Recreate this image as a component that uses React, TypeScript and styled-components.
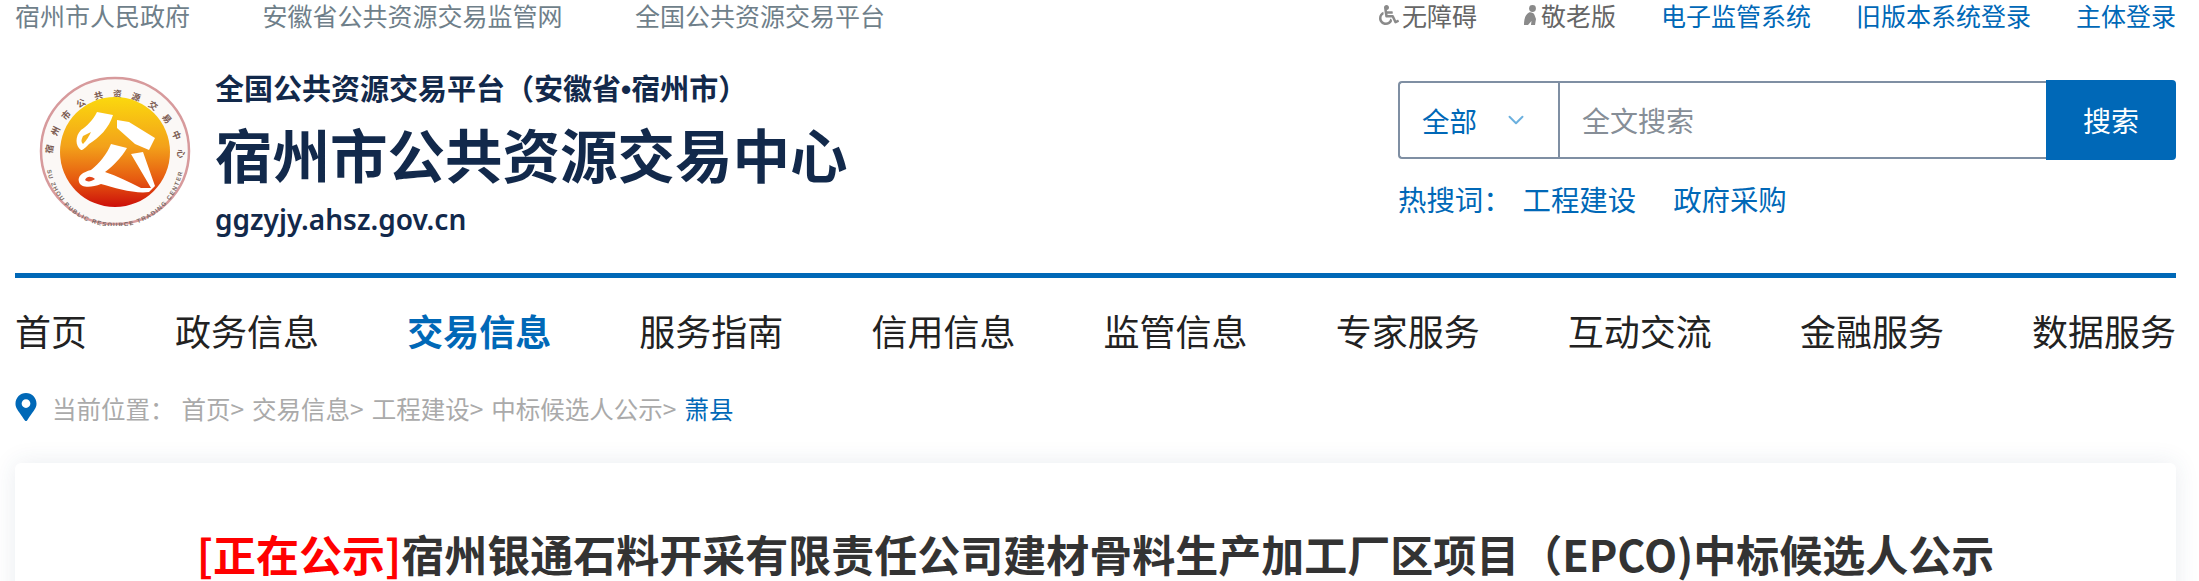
import React from 'react';
import styled, { createGlobalStyle } from 'styled-components';
import { ChevronDown } from 'lucide-react';
import { FaMapMarkerAlt, FaWheelchair } from 'react-icons/fa';

const blue = '#0068b7';
const navy = '#12294b';

const GlobalStyle = createGlobalStyle`
    html, body {
        margin: 0;
        padding: 0;
        background: #fff;
        font-family: "Noto Sans CJK SC", "Noto Sans", sans-serif;
    }
    a {
        text-decoration: none;
        color: inherit;
    }
`;

const Page = styled.div`
    height: 581px;
    overflow: hidden;
    padding: 0 23px 0 15px;
`;

// Top links
const TopBar = styled.div`
    display: flex;
    justify-content: space-between;
    height: 32px;
    font-size: 25px;
    line-height: 30px;
`;

const TopGroup = styled.div<{ $gap: number }>`
    display: flex;
    gap: ${(p) => p.$gap}px;
    align-items: flex-start;
`;

const TopLink = styled.a<{ $tone?: 'slate' | 'gray' | 'blue' }>`
    display: flex;
    align-items: center;
    gap: 3px;
    white-space: nowrap;
    color: ${(p) => (p.$tone === 'blue' ? blue : p.$tone === 'gray' ? '#666' : '#6f7f8a')};
    svg {
        color: #8a8a8a;
        flex: none;
    }
`;

// Header
const Header = styled.div`
    display: flex;
    justify-content: space-between;
    height: 241px;
`;

const Brand = styled.div`
    display: flex;
    padding-left: 24px;
    gap: 24px;
`;

const LogoWrap = styled.div`
    padding-top: 44px;
`;

const BrandText = styled.div`
    display: flex;
    flex-direction: column;
    padding-top: 35px;
    color: ${navy};
`;

const BrandSub = styled.div`
    font-size: 29px;
    line-height: 40px;
    font-weight: 700;
    white-space: nowrap;
`;

const BrandDot = styled.span`
    font-family: "Liberation Sans", sans-serif;
`;

const BrandTitle = styled.h1`
    margin: 3px 0 6px;
    font-size: 57.5px;
    line-height: 80px;
    font-weight: 700;
    white-space: nowrap;
`;

const BrandUrl = styled.div`
    font-family: "Noto Sans", sans-serif;
    font-size: 28px;
    line-height: 40px;
    font-weight: 600;
`;

const SearchCol = styled.div`
    width: 778px;
    padding-top: 48px;
`;

const SearchBox = styled.div`
    display: flex;
    height: 80px;
    align-items: stretch;
`;

const SearchFrame = styled.div`
    flex: 1;
    display: flex;
    margin: 1px 0;
    border: 2px solid #7f8fa3;
    border-right: none;
    border-radius: 4px 0 0 4px;
`;

const SelectBox = styled.div`
    width: 160px;
    display: flex;
    align-items: center;
    padding-left: 22px;
    gap: 26px;
    box-sizing: border-box;
    border-right: 2px solid #7f8fa3;
    font-size: 27.5px;
    color: ${blue};
    svg {
        color: #6bb0de;
    }
`;

const SearchInput = styled.input`
    flex: 1;
    min-width: 0;
    border: none;
    outline: none;
    padding: 0 22px;
    font-family: inherit;
    font-size: 28px;
    background: transparent;
    &::placeholder {
        color: #868e97;
        opacity: 1;
    }
`;

const SearchButton = styled.button`
    width: 130px;
    border: none;
    border-radius: 0 4px 4px 0;
    background: ${blue};
    color: #fff;
    font-family: inherit;
    font-size: 28px;
`;

const HotWords = styled.div`
    display: flex;
    margin-top: 19px;
    gap: 37px;
    font-size: 28.4px;
    line-height: 40px;
    color: ${blue};
`;

const HotLabel = styled.span`
    margin-right: -26px;
`;

// Navigation
const Nav = styled.nav`
    display: flex;
    justify-content: space-between;
    border-top: 5px solid ${blue};
    height: 103px;
    padding-bottom: 5px;
    align-items: center;
`;

const NavItem = styled.a<{ $active?: boolean }>`
    font-size: 36px;
    font-weight: ${(p) => (p.$active ? 700 : 400)};
    color: ${(p) => (p.$active ? blue : '#222')};
    white-space: nowrap;
`;

// Breadcrumb
const Crumbs = styled.div`
    display: flex;
    align-items: center;
    height: 45px;
    font-size: 24.5px;
    color: #aaa;
    white-space: nowrap;
    svg {
        color: ${blue};
        margin: -3px 12px 0 -3px;
    }
`;

const CrumbLabel = styled.span`
    margin-right: 7px;
`;

const CrumbLink = styled.a<{ $current?: boolean }>`
    margin-right: 8px;
    color: ${(p) => (p.$current ? blue : '#aaa')};
`;

// Article card
const Card = styled.div`
    margin-top: 32px;
    height: 300px;
    padding-top: 64px;
    box-sizing: border-box;
    background: #fff;
    border-radius: 6px;
    box-shadow: 0 0 24px rgba(40, 70, 110, 0.1);
    text-align: center;
`;

const Title = styled.h2`
    margin: 0;
    font-size: 43px;
    line-height: 52px;
    font-weight: 700;
    color: #333;
    white-space: nowrap;
`;

const TitleState = styled.span`
    color: #f00;
    font-weight: 700;
`;

const ringTop = '宿州市公共资源交易中心';
const ringBottom = 'SU ZHOU PUBLIC RESOURCE TRADING CENTER';

function Logo() {
    return (
        <svg width="152" height="150" viewBox="0 0 152 150">
            <defs>
                <linearGradient id="sun" x1="0" y1="0" x2="0" y2="1">
                    <stop offset="0" stopColor="#fbd80e" />
                    <stop offset="0.45" stopColor="#f3a11a" />
                    <stop offset="0.75" stopColor="#e65a10" />
                    <stop offset="1" stopColor="#cc0f0a" />
                </linearGradient>
                <path id="ringTopPath" d="M 13 84 A 63 63 0 1 1 139 84" />
                <path id="ringBottomPath" d="M 7 82 A 69 69 0 0 0 145 82" />
            </defs>
            <ellipse cx="76" cy="75" rx="74" ry="73" fill="#fbf8f6" stroke="#d79a9c" strokeWidth="2.5" />
            <text fontSize="9" fontWeight="700" fill="#7a5a50" fontFamily="'Noto Sans CJK SC', sans-serif">
                <textPath href="#ringTopPath" textLength="190" startOffset="6">{ringTop}</textPath>
            </text>
            <text fontSize="6" fontWeight="700" fill="#7a6a64" fontFamily="'Liberation Sans', sans-serif">
                <textPath href="#ringBottomPath" startOffset="12" textLength="190">{ringBottom}</textPath>
            </text>
            <circle cx="76" cy="76" r="55" fill="url(#sun)" />
            <g fill="#fff">
                <path d="M58 36 L74 39 C70 52 60 62 50 68 C46 72 44 74 42 74 C36 70 36 60 42 54 C48 50 54 44 58 36 Z" />
                <path d="M78 44 L90 46 L116 62 L110 74 L96 68 L78 52 Z" />
                <path d="M72 68 L88 72 C82 82 74 90 66 96 C78 100 90 106 102 112 L112 112 L92 78 L104 76 L116 110 L110 116 C96 118 76 112 62 108 C52 112 42 112 40 106 C38 100 44 96 52 94 C60 88 68 78 72 68 Z" />
            </g>
            <path d="M44 60 C42 64 42 66 44 68 C48 64 50 60 52 56 Z" fill="#f5b21a" />
            <path d="M46 104 C48 100 52 100 56 103 C52 106 48 106 46 104 Z" fill="#e2461a" />
        </svg>
    );
}

function ElderIcon() {
    return (
        <svg width="16" height="22" viewBox="0 0 16 22">
            <circle cx="10.5" cy="4.5" r="3.4" fill="#8a8a8a" />
            <path d="M7 8.5 C9 8 12 9 12.5 11 L14 15 L13 21 H9 L9.5 17 L6 21 H2 C2 15 3 11 7 8.5 Z" fill="#8a8a8a" />
        </svg>
    );
}

const navItems = ['首页', '政务信息', '交易信息', '服务指南', '信用信息', '监管信息', '专家服务', '互动交流', '金融服务', '数据服务'];
const crumbs = ['首页>', '交易信息>', '工程建设>', '中标候选人公示>'];

export default function App() {
    return (
        <Page>
            <GlobalStyle />
            <TopBar>
                <TopGroup $gap={72.5}>
                    <TopLink>宿州市人民政府</TopLink>
                    <TopLink>安徽省公共资源交易监管网</TopLink>
                    <TopLink>全国公共资源交易平台</TopLink>
                </TopGroup>
                <TopGroup $gap={45}>
                    <TopLink $tone="gray"><FaWheelchair size={20} />无障碍</TopLink>
                    <TopLink $tone="gray"><ElderIcon />敬老版</TopLink>
                    <TopLink $tone="blue">电子监管系统</TopLink>
                    <TopLink $tone="blue">旧版本系统登录</TopLink>
                    <TopLink $tone="blue">主体登录</TopLink>
                </TopGroup>
            </TopBar>

            <Header>
                <Brand>
                    <LogoWrap><Logo /></LogoWrap>
                    <BrandText>
                        <BrandSub>全国公共资源交易平台（安徽省<BrandDot>•</BrandDot>宿州市）</BrandSub>
                        <BrandTitle>宿州市公共资源交易中心</BrandTitle>
                        <BrandUrl>ggzyjy.ahsz.gov.cn</BrandUrl>
                    </BrandText>
                </Brand>
                <SearchCol>
                    <SearchBox>
                        <SearchFrame>
                            <SelectBox>全部<ChevronDown size={26} strokeWidth={1.8} /></SelectBox>
                            <SearchInput placeholder="全文搜索" />
                        </SearchFrame>
                        <SearchButton>搜索</SearchButton>
                    </SearchBox>
                    <HotWords>
                        <HotLabel>热搜词：</HotLabel>
                        <a>工程建设</a>
                        <a>政府采购</a>
                    </HotWords>
                </SearchCol>
            </Header>

            <Nav>
                {navItems.map((item) => (
                    <NavItem key={item} $active={item === '交易信息'}>{item}</NavItem>
                ))}
            </Nav>

            <Crumbs>
                <FaMapMarkerAlt size={28} />
                <CrumbLabel>当前位置：</CrumbLabel>
                {crumbs.map((c) => (
                    <CrumbLink key={c}>{c}</CrumbLink>
                ))}
                <CrumbLink $current>萧县</CrumbLink>
            </Crumbs>

            <Card>
                <Title>
                    <TitleState>[正在公示]</TitleState>宿州银通石料开采有限责任公司建材骨料生产加工厂区项目（EPCO)中标候选人公示
                </Title>
            </Card>
        </Page>
    );
}
